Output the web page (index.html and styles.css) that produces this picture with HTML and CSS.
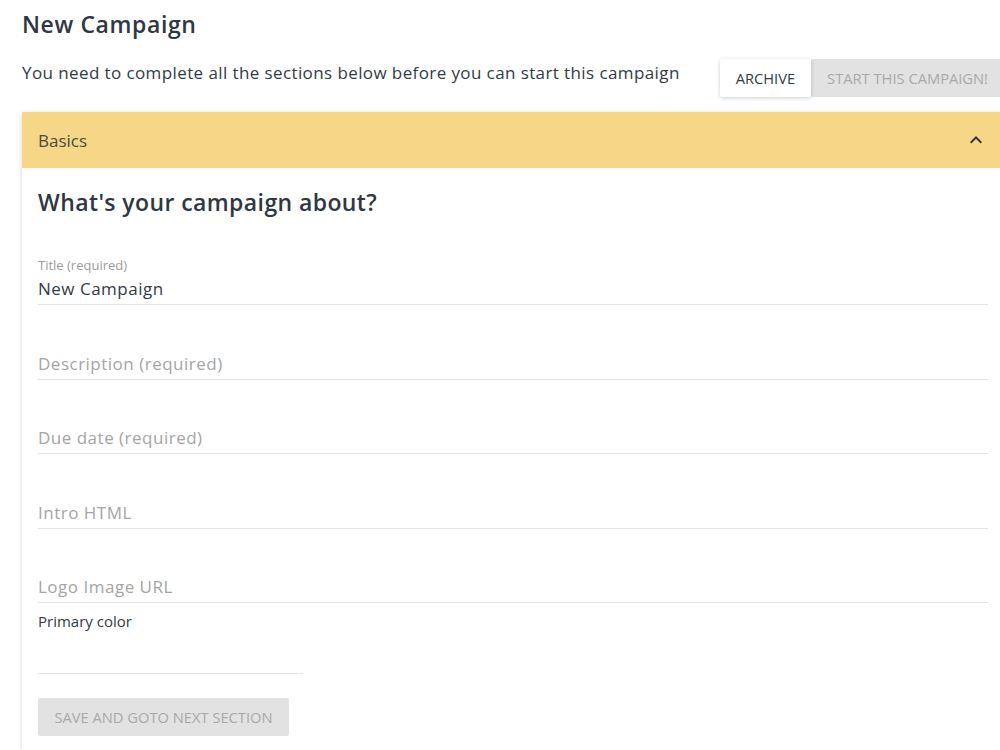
FILE: index.html
```html
<!DOCTYPE html>
<html lang="en">
<head>
    <meta charset="UTF-8">
    <title>New Campaign</title>
    <link rel="stylesheet" href="styles.css">
</head>
<body>
    <div class="page">
        <h1 class="page-title">New Campaign</h1>

        <!-- Status row with actions -->
        <div class="status-row">
            <p class="status-text">You need to complete all the sections below before you can start this campaign</p>
            <div class="actions">
                <button class="btn btn-archive">Archive</button>
                <button class="btn btn-disabled" disabled>Start this campaign!</button>
            </div>
        </div>

        <!-- Basics section -->
        <div class="card">
            <div class="card-header">
                <span>Basics</span>
                <svg class="chevron" width="24" height="24" viewBox="0 0 24 24"><path d="M7.41 15.41 12 10.83l4.59 4.58L18 14l-6-6-6 6z" fill="#333"/></svg>
            </div>
            <div class="card-body">
                <h2 class="section-title">What's your campaign about?</h2>

                <div class="field field-filled">
                    <label class="field-label">Title (required)</label>
                    <div class="field-value">New Campaign</div>
                </div>
                <div class="field">
                    <div class="field-placeholder">Description (required)</div>
                </div>
                <div class="field">
                    <div class="field-placeholder">Due date (required)</div>
                </div>
                <div class="field">
                    <div class="field-placeholder">Intro HTML</div>
                </div>
                <div class="field">
                    <div class="field-placeholder">Logo Image URL</div>
                </div>

                <div class="color-field">
                    <div class="color-label">Primary color</div>
                    <div class="color-input"></div>
                </div>

                <button class="btn btn-disabled btn-save" disabled>Save and goto next section</button>
            </div>
        </div>
    </div>
</body>
</html>
```

FILE: styles.css
```css
body {
    font-family: "Open Sans", "DejaVu Sans", sans-serif;
    margin: 0;
    padding: 0;
    background: #fff;
    color: #333b45;
    overflow: hidden;
}
.page {
    padding: 0 0 0 22px;
    margin-right: -4px;
}
.page-title {
    font-size: 23px;
    font-weight: 600;
    letter-spacing: 0.6px;
    margin: 0;
    padding-top: 9px;
    line-height: 30px;
    color: #2f3742;
}
.status-row {
    display: flex;
    justify-content: space-between;
    align-items: flex-start;
    margin-top: 20px;
}
.status-text {
    margin: 0;
    font-size: 17px;
    letter-spacing: 0.4px;
    line-height: 28px;
    color: #333b45;
}
.actions {
    display: flex;
}
.btn {
    font-family: inherit;
    font-size: 14.7px;
    text-transform: uppercase;
    border: none;
    border-radius: 2px;
    height: 38px;
    padding: 0 16px;
}
.btn-archive {
    background: #fff;
    color: #333b45;
    box-shadow: 0 1px 4px rgba(0, 0, 0, 0.2);
    position: relative;
    z-index: 1;
}
.btn-disabled {
    background: #e2e2e2;
    color: #a9a9a9;
}
.card {
    margin-top: 15px;
    box-shadow: 0 1px 4px rgba(0, 0, 0, 0.18);
}
.card-header {
    background: #f6d788;
    height: 56px;
    display: flex;
    align-items: center;
    justify-content: space-between;
    padding: 0 16px;
    font-size: 17px;
    color: #4b4a3c;
}
.card-body {
    padding: 18px 16px 14px;
}
.section-title {
    font-size: 23px;
    font-weight: 600;
    letter-spacing: 0.4px;
    margin: 0;
    line-height: 32px;
    color: #2f3742;
}
.field {
    border-bottom: 1px solid #e4e4e4;
    height: 58px;
    display: flex;
    flex-direction: column;
    justify-content: flex-end;
    padding-bottom: 3px;
    margin-top: 12.5px;
}
.field-filled {
    margin-top: 34px;
    height: 52px;
    padding-bottom: 0;
}
.field-label {
    font-size: 13px;
    color: #9b9b9b;
    line-height: 18px;
}
.field-value {
    font-size: 17px;
    letter-spacing: 0.5px;
    line-height: 30px;
    color: #333b45;
}
.field-placeholder {
    font-size: 17px;
    letter-spacing: 0.5px;
    line-height: 24px;
    color: #a5a5a5;
}
.color-field {
    margin-top: 7px;
}
.color-label {
    font-size: 15px;
    line-height: 22px;
    color: #333b45;
}
.color-input {
    width: 265px;
    height: 41px;
    border-bottom: 1px solid #e4e4e4;
}
.btn-save {
    margin-top: 24px;
    width: 251px;
}
```
